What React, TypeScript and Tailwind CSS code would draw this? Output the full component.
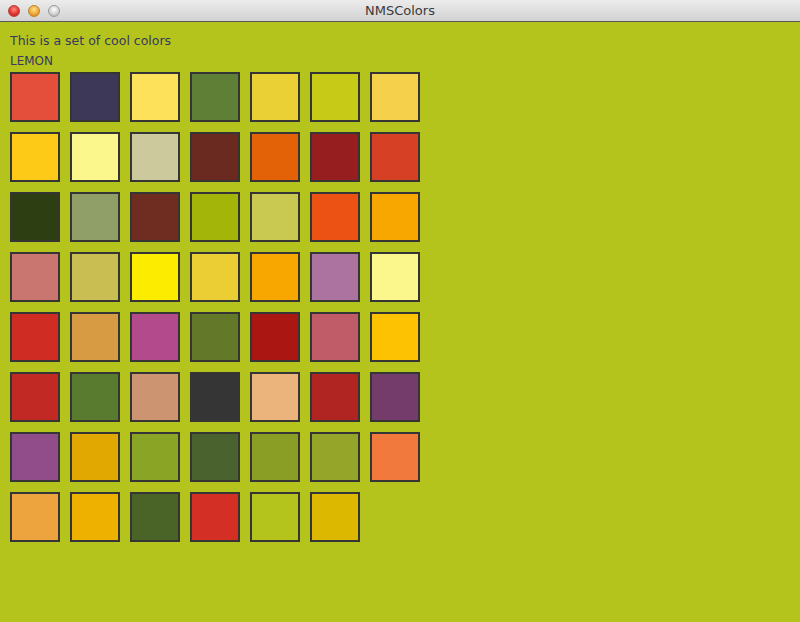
const colors = [
  "#e44f3b", "#3d3858", "#fde15a", "#5f7e36", "#ead034", "#c8ca18", "#f5d04a",
  "#fdca18", "#fbf78c", "#ccc99c", "#6a2a1f", "#e36208", "#961e1e", "#d64025",
  "#2e3e13", "#8f9f67", "#6f2d22", "#a3b508", "#c9c851", "#eb5213", "#f8a600",
  "#c97670", "#c8be52", "#fcec00", "#eace34", "#f8a600", "#ac72a0", "#fbf78c",
  "#cf2c24", "#d69b43", "#b34a8b", "#637829", "#aa1712", "#c05b68", "#fdc302",
  "#c12a24", "#587b2f", "#cc9470", "#353535", "#ebb47c", "#b02521", "#733c6b",
  "#904d89", "#e0a800", "#8aa526", "#4a622d", "#8a9e25", "#95a529", "#f2793e",
  "#eda43f", "#eeb100", "#4a6428", "#d42f24", "#b5c41d", "#ddb800",
];

export default function App() {
  return (
    <div className="w-[800px] h-[622px] flex flex-col bg-[#b5c41d] font-['DejaVu_Sans',sans-serif] overflow-hidden">
      <div className="relative h-[22px] shrink-0 flex items-center justify-center bg-gradient-to-b from-[#ececec] to-[#d2d2d2] border-b border-[#585858]">
        <div className="absolute left-[8px] top-[5px] flex gap-[8px]">
          <span className="w-[12px] h-[12px] rounded-full bg-[radial-gradient(circle_at_50%_35%,#ff8a80,#e0302a_60%,#a8201c)] border border-[#b4413b]" />
          <span className="w-[12px] h-[12px] rounded-full bg-[radial-gradient(circle_at_50%_35%,#ffe08a,#f0a430_60%,#c07a12)] border border-[#b98530]" />
          <span className="w-[12px] h-[12px] rounded-full bg-[radial-gradient(circle_at_50%_35%,#ffffff,#cfcfcf_60%,#9d9d9d)] border border-[#9a9a9a]" />
        </div>
        <span className="text-[13px] text-[#3a3a3a] font-['Lucida_Grande','DejaVu_Sans',sans-serif]">NMSColors</span>
      </div>
      <div className="pl-[10px] pt-[11px]">
        <p className="text-[12.5px] leading-[16px] text-[#38385e]">This is a set of cool colors</p>
        <p className="text-[12px] leading-[14px] mt-[5px] text-[#38385e]">LEMON</p>
        <div className="mt-[4px] grid grid-cols-[repeat(7,50px)] gap-[10px]">
          {colors.map((c, i) => (
            <div
              key={i}
              className="w-[50px] h-[50px] border-2 border-[#353535]"
              style={{ backgroundColor: c }}
            />
          ))}
        </div>
      </div>
    </div>
  );
}
